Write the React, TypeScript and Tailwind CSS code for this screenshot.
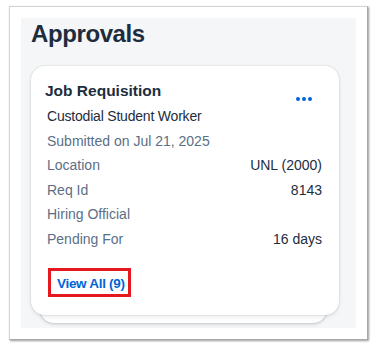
const rows: { label: string; value?: string }[] = [
  { label: "Submitted on Jul 21, 2025" },
  { label: "Location", value: "UNL (2000)" },
  { label: "Req Id", value: "8143" },
  { label: "Hiring Official" },
  { label: "Pending For", value: "16 days" },
];

export default function App() {
  return (
    <div
      className="w-[377px] h-[352px] bg-white overflow-hidden"
      style={{ fontFamily: '"Liberation Sans", Arial, sans-serif' }}
    >
      {/* Screenshot frame */}
      <div className="ml-[9px] mt-[6px] w-[359px] h-[334px] bg-white border border-[#d4d4d4] border-r-[#a8a8a8] border-b-[#a8a8a8] shadow-[1px_1px_2px_rgba(0,0,0,0.4)] p-[11px]">
        {/* Panel */}
        <div className="w-[335px] h-[310px] bg-[#f5f6f7] pl-[10px] pt-[2px]">
          <h1 className="text-[24px] leading-[28px] font-bold tracking-[-0.4px] text-[#1d2d3e]">
            Approvals
          </h1>

          {/* Card stack */}
          <div className="relative mt-[18px] w-[308px]">
            <div className="absolute left-[9px] right-[12px] bottom-[-8px] h-[40px] rounded-[14px] bg-white shadow-[0_0_2px_rgba(0,0,0,0.2),0_2px_3px_rgba(0,0,0,0.1)]" />
            <div className="relative rounded-[14px] bg-white shadow-[0_0_2px_rgba(0,0,0,0.18),0_2px_4px_rgba(0,0,0,0.08)] pl-[14px] pr-[17px] pt-[15px] pb-[18px]">
              <div className="flex justify-between items-start">
                <div className="text-[15.5px] leading-[20px] font-bold text-[#1d2d3e]">
                  Job Requisition
                </div>
                <div className="flex gap-[2px] mt-[16px] mr-[10px]">
                  <span className="w-[4px] h-[4px] rounded-full bg-[#0064d9]" />
                  <span className="w-[4px] h-[4px] rounded-full bg-[#0064d9]" />
                  <span className="w-[4px] h-[4px] rounded-full bg-[#0064d9]" />
                </div>
              </div>
              <div className="mt-[3px] pl-[2px] text-[14px] leading-[24.5px] tracking-[-0.2px] text-[#1d2d3e]">
                Custodial Student Worker
              </div>
              {rows.map((r) => (
                <div
                  key={r.label}
                  className="flex justify-between pl-[2px] text-[14px] leading-[24.5px]"
                >
                  <span className="text-[#5b6f86]">{r.label}</span>
                  {r.value && <span className="text-[#1d2d3e]">{r.value}</span>}
                </div>
              ))}
              <div className="mt-[17px] ml-[3px] w-[83px] h-[29px] border-[3px] border-[#e5171f] pl-[6px]">
                <span className="text-[13.5px] leading-[20px] font-bold tracking-[-0.3px] text-[#0064d9] whitespace-nowrap">
                  View All (9)
                </span>
              </div>
            </div>
          </div>
        </div>
      </div>
    </div>
  );
}
